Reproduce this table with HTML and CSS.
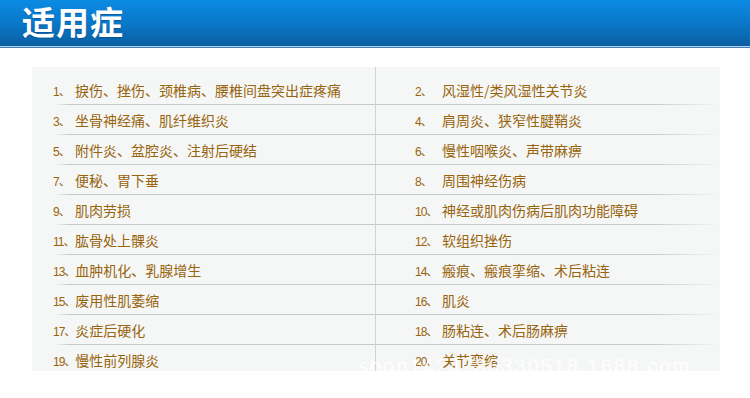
FILE: index.html
```html
<!DOCTYPE html>
<html lang="zh">
<head>
<meta charset="utf-8">
<title>适用症</title>
<link rel="stylesheet" href="styles.css">
</head>
<body>
<header class="banner">
  <h1 class="title">适用症</h1>
</header>
<section class="panel">
  <div class="cell left"><span class="num">1、</span><span class="txt">捩伤、挫伤、颈椎病、腰椎间盘突出症疼痛</span></div>
  <div class="cell right"><span class="num">2、</span><span class="txt">风湿性/类风湿性关节炎</span></div>
  <div class="cell left"><span class="num">3、</span><span class="txt">坐骨神经痛、肌纤维织炎</span></div>
  <div class="cell right"><span class="num">4、</span><span class="txt">肩周炎、狭窄性腱鞘炎</span></div>
  <div class="cell left"><span class="num">5、</span><span class="txt">附件炎、盆腔炎、注射后硬结</span></div>
  <div class="cell right"><span class="num">6、</span><span class="txt">慢性咽喉炎、声带麻痹</span></div>
  <div class="cell left"><span class="num">7、</span><span class="txt">便秘、胃下垂</span></div>
  <div class="cell right"><span class="num">8、</span><span class="txt">周围神经伤病</span></div>
  <div class="cell left"><span class="num">9、</span><span class="txt">肌肉劳损</span></div>
  <div class="cell right"><span class="num">10、</span><span class="txt">神经或肌肉伤病后肌肉功能障碍</span></div>
  <div class="cell left"><span class="num">11、</span><span class="txt">肱骨处上髁炎</span></div>
  <div class="cell right"><span class="num">12、</span><span class="txt">软组织挫伤</span></div>
  <div class="cell left"><span class="num">13、</span><span class="txt">血肿机化、乳腺增生</span></div>
  <div class="cell right"><span class="num">14、</span><span class="txt">瘢痕、瘢痕挛缩、术后粘连</span></div>
  <div class="cell left"><span class="num">15、</span><span class="txt">废用性肌萎缩</span></div>
  <div class="cell right"><span class="num">16、</span><span class="txt">肌炎</span></div>
  <div class="cell left"><span class="num">17、</span><span class="txt">炎症后硬化</span></div>
  <div class="cell right"><span class="num">18、</span><span class="txt">肠粘连、术后肠麻痹</span></div>
  <div class="cell left last"><span class="num">19、</span><span class="txt">慢性前列腺炎</span></div>
  <div class="cell right last"><span class="num">20、</span><span class="txt">关节挛缩</span></div>
  <div class="watermark">shop1424786330518.1688.com</div>
</section>
</body>
</html>
```

FILE: styles.css
```css
html, body {
  margin: 0;
  padding: 0;
  background: #ffffff;
}

body {
  font-family: "Liberation Sans", "Noto Sans CJK SC", sans-serif;
}

.banner {
  height: 46px;
  background: linear-gradient(to bottom, #0a8be4 0%, #0a78c8 50%, #0a5fa2 100%);
  border-bottom: 1px solid #b3d2ee;
  box-shadow: 0 1px 0 #3f7fbd;
  display: flex;
  align-items: flex-start;
  padding-left: 22px;
  margin-bottom: 1px;
}

.title {
  margin: 0;
  font-family: "Noto Sans CJK SC", sans-serif;
  font-weight: 700;
  font-size: 33px;
  line-height: 42px;
  color: #ffffff;
  letter-spacing: 1px;
  text-shadow: 0 1px 1px rgba(0, 40, 90, 0.35);
}

.panel {
  position: relative;
  margin: 20px 0 0 32px;
  width: 688px;
  height: 304px;
  box-sizing: border-box;
  padding-top: 8px;
  background-color: #f5f7f6;
  background-image: linear-gradient(#d2d4d3, #d2d4d3);
  background-size: 1px 8px;
  background-position: 343px 0;
  background-repeat: no-repeat;
  display: grid;
  grid-template-columns: 344px 344px;
  grid-auto-rows: 30px;
  overflow: hidden;
}

.cell {
  display: flex;
  align-items: center;
  height: 30px;
  font-size: 14px;
  color: #98640d;
  background-repeat: no-repeat;
  white-space: nowrap;
}

.left {
  padding-left: 21px;
  border-right: 1px solid #d2d4d3;
  background-image: linear-gradient(to right, rgba(200, 200, 200, 0), #c9caca 14px);
  background-size: calc(100% - 23px) 1px;
  background-position: right bottom;
}

.right {
  padding-left: 39px;
  background-image: linear-gradient(to right, #c9caca 0%, #c9caca 80%, rgba(200, 200, 200, 0) 100%);
  background-size: 100% 1px;
  background-position: left bottom;
}

.cell.last {
  background-image: none;
}

.left .num {
  min-width: 22px;
}

.right .num {
  min-width: 27px;
}

.num {
  flex: none;
  font-family: "Liberation Sans", "Noto Sans CJK SC", sans-serif;
  font-size: 12px;
  letter-spacing: -1px;
}

.txt {
  font-family: "Noto Sans CJK SC", sans-serif;
  font-size: 14px;
}

.watermark {
  position: absolute;
  left: 326px;
  top: 289px;
  font-family: "Liberation Sans", sans-serif;
  font-size: 20px;
  line-height: 20px;
  letter-spacing: 2px;
  color: rgba(255, 255, 255, 0.9);
  white-space: nowrap;
  pointer-events: none;
}
```
